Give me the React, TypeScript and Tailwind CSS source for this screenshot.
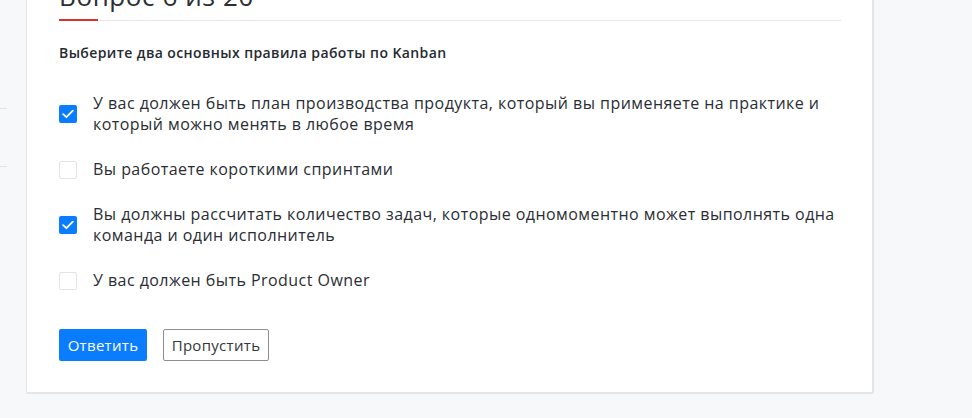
import React from "react";

const options = [
  { text: "У вас должен быть план производства продукта, который вы применяете на практике и который можно менять в любое время", checked: true },
  { text: "Вы работаете короткими спринтами", checked: false },
  { text: "Вы должны рассчитать количество задач, которые одномоментно может выполнять одна команда и один исполнитель", checked: true },
  { text: "У вас должен быть Product Owner", checked: false },
];

function Check({ checked }: { checked: boolean }) {
  if (checked) {
    return (
      <span className="flex h-[18px] w-[18px] shrink-0 items-center justify-center rounded-[2px] bg-[#0a7cff]">
        <svg width="12" height="10" viewBox="0 0 12 10" fill="none">
          <path d="M1.2 5.2 L4.4 8.2 L10.8 1.6" stroke="white" strokeWidth="1.8" strokeLinecap="round" strokeLinejoin="round" />
        </svg>
      </span>
    );
  }
  return <span className="h-[18px] w-[18px] shrink-0 rounded-[2px] border border-[#e2e4e8] bg-white" />;
}

export default function App() {
  return (
    <div className="flex min-h-screen w-full bg-[#f7f8fa] font-['Open_Sans',sans-serif] text-[#2a2d33]">
      <div className="flex w-[26px] shrink-0 flex-col">
        <div className="mt-[108px] h-px w-[7px] bg-[#e0e2e6]" />
        <div className="mt-[57px] h-px w-[7px] bg-[#e0e2e6]" />
      </div>
      <div className="mt-[-60px] self-start w-[848px] rounded-[2px] border border-[#e4e5e8] border-b-2 border-r-2 bg-white px-[32px] pb-[31px] pt-[40px]">
        <h2 className="text-[26px] leading-[30px] tracking-[0.6px] text-[#2b2e33]">Вопрос 6 из 20</h2>
        <div className="mt-[8px] flex h-[2px] w-[782px]">
          <div className="h-[2px] w-[39px] bg-[#d8332b]" />
          <div className="mt-[1px] h-px flex-1 bg-[#e6e7ea]" />
        </div>
        <p className="mt-[22px] text-[14px] font-semibold leading-[20px] tracking-[0.4px] text-[#262a30]">Выберите два основных правила работы по Kanban</p>
        <div className="mt-[30px] flex flex-col gap-[24px]">
          {options.map((o, i) => (
            <label key={i} className="flex items-center gap-[16px]">
              <Check checked={o.checked} />
              <span className="max-w-[750px] text-[16px] leading-[21px] tracking-[0.45px]">{o.text}</span>
            </label>
          ))}
        </div>
        <div className="mt-[38px] flex gap-[16px]">
          <button className="h-[32px] w-[88px] rounded-[2px] bg-[#0a7cff] text-[15px] tracking-[0.3px] text-white">Ответить</button>
          <button className="h-[32px] w-[106px] rounded-[2px] border border-[#8b8e94] bg-white text-[15px] tracking-[0.3px] text-[#33363b]">Пропустить</button>
        </div>
      </div>
    </div>
  );
}
